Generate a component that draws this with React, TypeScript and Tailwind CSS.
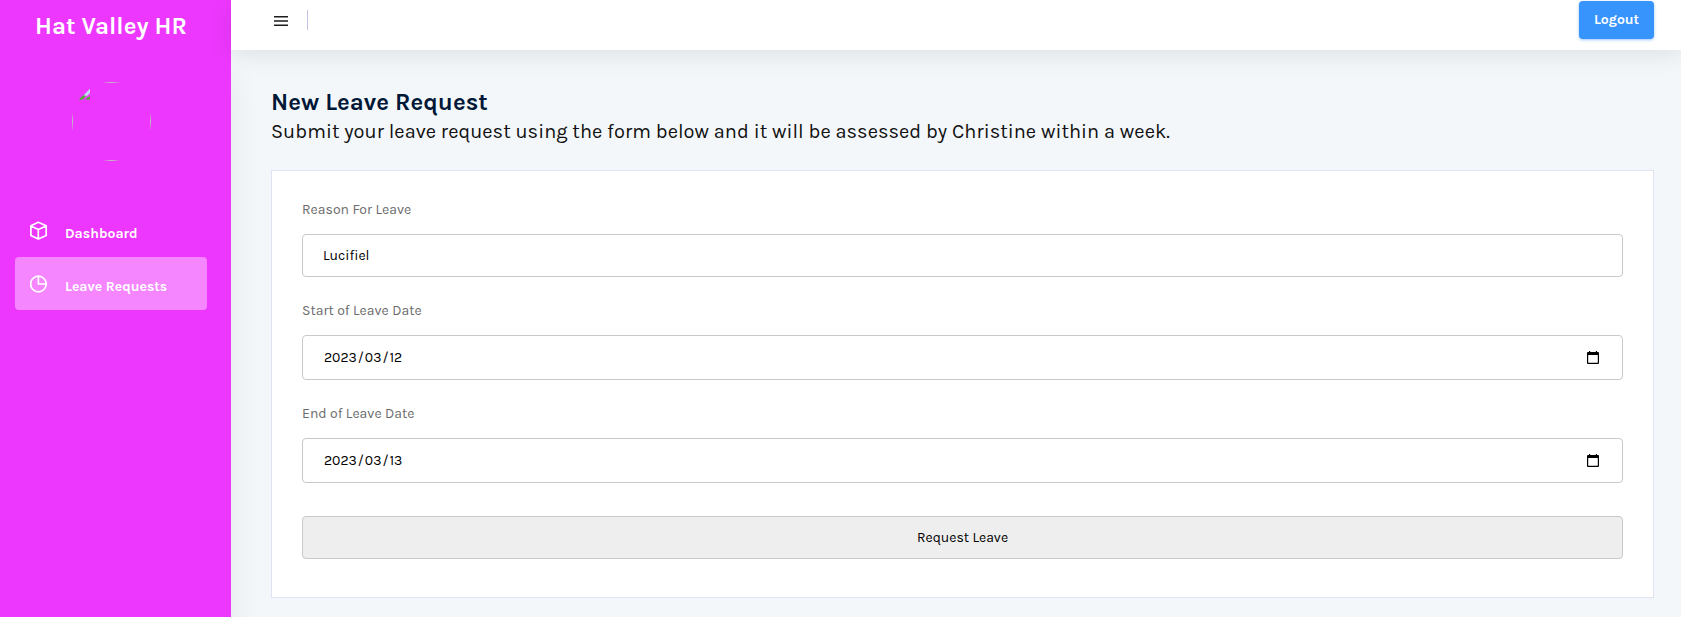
import type { ReactNode } from "react";

function CubeIcon() {
  return (
    <svg className="h-[19px] w-[18px]" viewBox="0 0 18 19" fill="none" stroke="currentColor" strokeWidth="1.7" strokeLinejoin="round">
      <path d="M8.3 1.3 16.2 4.8V14.5L8.3 18.1 0.9 14.5V4.8Z M0.9 5 8.3 8.5 16.2 5 M8.3 8.5V17.9" />
    </svg>
  );
}

function PieIcon() {
  return (
    <svg className="h-[19px] w-[18px]" viewBox="0 0 18 19" fill="none" stroke="currentColor" strokeWidth="1.7">
      <circle cx="8.4" cy="10" r="7.8" />
      <path d="M8.4 2.2V10H16.2" />
    </svg>
  );
}

function CalendarIcon() {
  return (
    <svg className="mr-[23px] h-[13px] w-3" viewBox="0 0 12 13">
      <path fill="#000" fillRule="evenodd" d="M2 0H3.2V1H8.8V0H10V1H11A1 1 0 0 1 12 2V12A1 1 0 0 1 11 13H1A1 1 0 0 1 0 12V2A1 1 0 0 1 1 1H2ZM1.2 4V11.8H10.8V4Z" />
    </svg>
  );
}

function NavItem({ icon, label, active }: { icon: ReactNode; label: string; active?: boolean }) {
  return (
    <a
      className={
        active
          ? "flex h-[53px] items-start rounded bg-[#f586ff] pl-[15px] text-white"
          : "flex h-[53px] items-start rounded pl-[15px] text-white"
      }
    >
      <span className="mt-[17px]">{icon}</span>
      <span className="mt-[20px] ml-[17px] text-sm leading-5 font-bold">{label}</span>
    </a>
  );
}

function BrokenAvatar() {
  return (
    <div className="mt-[41px] ml-[72px] h-[79px] w-[79px] overflow-hidden rounded-full">
      <div className="h-full w-full border border-[#c0c0c0] pt-1 pl-[5px]">
        <svg className="h-[14px] w-[14px]" viewBox="0 0 14 14">
          <path fill="#c3dcf6" d="M12 1.5V6L8.5 9.5H4.5Z" />
          <path fill="#55a63c" d="M0.5 12.8 5 8.3 8.3 8.8 4.3 12.8ZM7.3 12.8 9.5 10.3 12 9.2V12.8Z" />
        </svg>
      </div>
    </div>
  );
}

function DateField({ parts }: { parts: string[] }) {
  return (
    <div className="mt-[14px] flex h-[45px] items-center justify-between rounded-[4px] border border-[#c9c9c9] pl-5 text-sm leading-5 text-black">
      <span>
        <span className="px-px">{parts[0]}</span>/<span className="px-px">{parts[1]}</span>/
        <span className="px-px">{parts[2]}</span>
      </span>
      <CalendarIcon />
    </div>
  );
}

function Label({ children }: { children: ReactNode }) {
  return <div className="text-sm leading-5 tracking-[0.02px] text-[#6c6c6c]">{children}</div>;
}

export default function App() {
  return (
    <div className="flex h-[617px] overflow-hidden bg-[#f3f7fa] font-['Karla','Roboto','Liberation_Sans',sans-serif]">
      <aside className="w-[231px] shrink-0 bg-[#ed37fe] shadow-[0_75px_30px_0_rgba(0,0,0,0.07)]">
        <h1 className="mt-[11px] ml-[35px] text-2xl leading-[30px] font-bold whitespace-nowrap text-white">Hat Valley HR</h1>
        <BrokenAvatar />
        <nav className="mt-[43px] mr-6 ml-[15px]">
          <NavItem icon={<CubeIcon />} label="Dashboard" />
          <NavItem icon={<PieIcon />} label="Leave Requests" active />
        </nav>
      </aside>
      <div className="min-w-0 flex-1">
        <header className="flex h-[50px] items-start bg-white pr-[27px] shadow-[0_5px_25px_0_rgba(0,0,0,0.09)]">
          <svg className="mt-4 ml-[43px] h-[10px] w-[14px]" viewBox="0 0 14 10">
            <path fill="#1c1c1c" d="M0 0H14V1.5H0ZM0 4.2H14V5.8H0ZM0 8.5H14V10H0Z" />
          </svg>
          <span className="mt-[10px] ml-[19px] h-5 w-px bg-[#c3c6e8]" />
          <button className="mt-px ml-auto h-[38px] w-[75px] rounded-[4px] bg-[#3794fc] text-sm leading-5 font-bold text-white shadow-[0_1px_3px_0_rgba(55,148,252,0.5)]">
            Logout
          </button>
        </header>
        <main className="pt-[37px] pr-[27px] pl-10">
          <h2 className="text-2xl leading-[30px] font-bold text-[#001737]">New Leave Request</h2>
          <p className="text-xl leading-[30px] tracking-[0.033px] text-[#111]">
            Submit your leave request using the form below and it will be assessed by Christine within a week.
          </p>
          <section className="mt-[23px] h-[428px] border border-[#e0e3f4] bg-white px-[30px] pt-[29px]">
            <Label>Reason For Leave</Label>
            <div className="mt-[14px] mb-6 flex h-[43px] items-center rounded-[4px] border border-[#c9c9c9] pl-5 text-sm leading-5 text-black">
              Lucifiel
            </div>
            <Label>Start of Leave Date</Label>
            <DateField parts={["2023", "03", "12"]} />
            <div className="h-6" />
            <Label>End of Leave Date</Label>
            <DateField parts={["2023", "03", "13"]} />
            <button className="mt-[33px] h-[43px] w-full rounded-[4px] border border-[#c9c9c9] bg-[#eeeeee] text-sm leading-5 text-black">
              Request Leave
            </button>
          </section>
        </main>
      </div>
    </div>
  );
}
